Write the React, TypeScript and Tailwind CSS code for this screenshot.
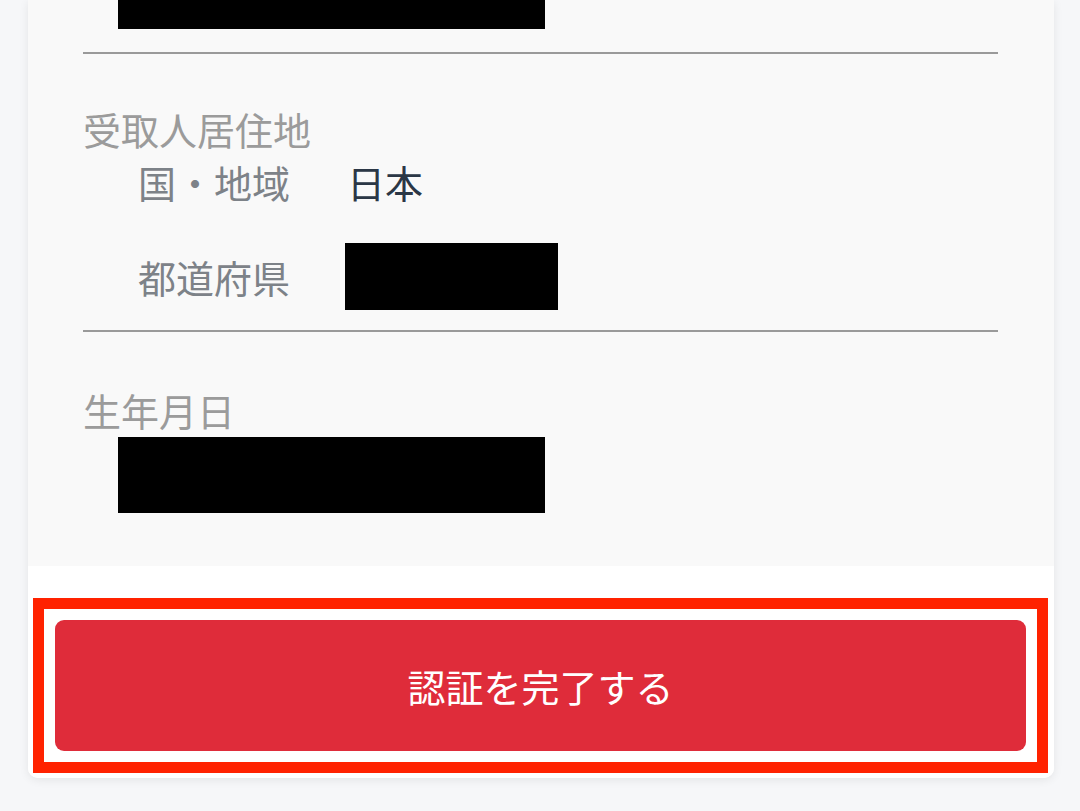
export default function App() {
  return (
    <div className="h-[811px] overflow-hidden bg-[#f6f7f9] font-['Noto_Sans_CJK_JP','Noto_Sans',sans-serif]">
      <div className="mx-[28px] w-[1026px] overflow-hidden rounded-b-[10px] bg-white shadow-[0_2px_10px_rgba(0,0,0,0.08)]">
        <div className="bg-[#f9f9f9] pl-[55px] pr-[56px] pb-[53px]">
          <div className="ml-[35px] h-[29px] w-[427px] bg-black" />
          <div className="mt-[23px] h-[2px] bg-[#9a9a9a]" />

          <div className="mt-[56px] text-[38px] leading-[38px] text-[#9b9b9b]">受取人居住地</div>
          <div className="ml-[55px] mt-[15px] grid grid-cols-[207px_1fr] items-center gap-y-[42px] text-[38px] leading-[38px]">
            <div className="text-[#7d8288]">国・地域</div>
            <div className="pl-[2px] text-[#2b3746]">日本</div>
            <div className="text-[#7d8288]">都道府県</div>
            <div className="h-[67px] w-[213px] bg-black" />
          </div>
          <div className="mt-[20px] h-[2px] bg-[#9a9a9a]" />

          <div className="mt-[59px] text-[38px] leading-[38px] text-[#9b9b9b]">生年月日</div>
          <div className="ml-[35px] mt-[8px] h-[76px] w-[427px] bg-black" />
        </div>

        <div className="bg-white pt-[32px] pb-[5px] pl-[5px] pr-[6px]">
          <div className="border-[11px] border-[#ff2200] p-[11px]">
            <button className="flex h-[131px] w-full items-center justify-center rounded-[9px] bg-[#df2c3a] text-[38px] text-white">
              認証を完了する
            </button>
          </div>
        </div>
      </div>
    </div>
  );
}
